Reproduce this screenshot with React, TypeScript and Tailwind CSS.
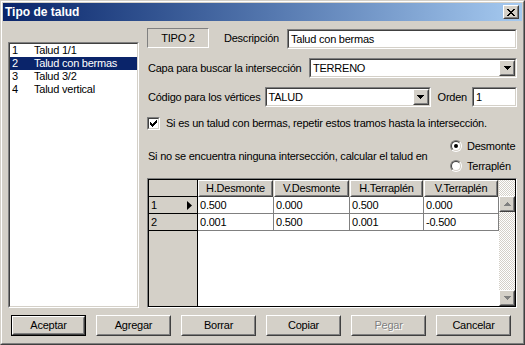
import React from "react";

type P = { className?: string; innerClassName?: string; children?: React.ReactNode };

function Sunken({ className = "", innerClassName = "", children }: P) {
  return (
    <div className={`border border-t-[#808080] border-l-[#808080] border-b-white border-r-white ${className}`}>
      <div className={`w-full h-full border border-t-[#404040] border-l-[#404040] border-b-[#d4d0c8] border-r-[#d4d0c8] ${innerClassName}`}>
        {children}
      </div>
    </div>
  );
}

function Raised({ className = "", innerClassName = "", children }: P) {
  return (
    <div className={`border border-t-white border-l-white border-b-[#404040] border-r-[#404040] bg-[#d4d0c8] ${className}`}>
      <div className={`w-full h-full border border-t-[#d4d0c8] border-l-[#d4d0c8] border-b-[#808080] border-r-[#808080] flex items-center justify-center ${innerClassName}`}>
        {children}
      </div>
    </div>
  );
}

function DownArrow({ color = "#000" }: { color?: string }) {
  return (
    <svg width="7" height="4" viewBox="0 0 7 4" className="block">
      <path d="M0 0h7v1H0zM1 1h5v1H1zM2 2h3v1H2zM3 3h1v1H3z" fill={color} />
    </svg>
  );
}

function UpArrow({ color = "#000" }: { color?: string }) {
  return (
    <svg width="7" height="4" viewBox="0 0 7 4" className="block">
      <path d="M3 0h1v1H3zM2 1h3v1H2zM1 2h5v1H1zM0 3h7v1H0z" fill={color} />
    </svg>
  );
}

function Combo({ className, value }: { className: string; value: string }) {
  return (
    <Sunken className={className} innerClassName="bg-white flex items-center">
      <span className="flex-1 pl-[2px] leading-none">{value}</span>
      <Raised className="w-[16px] h-full flex-none">
        <DownArrow />
      </Raised>
    </Sunken>
  );
}

function Radio({ checked, label }: { checked?: boolean; label: string }) {
  return (
    <div className="flex items-center h-[16px] gap-[5px]">
      <div className="w-[12px] h-[12px] rounded-full border border-t-[#808080] border-l-[#808080] border-b-white border-r-white">
        <div className="w-full h-full rounded-full border border-t-[#404040] border-l-[#404040] border-b-[#d4d0c8] border-r-[#d4d0c8] bg-white flex items-center justify-center">
          {checked && <div className="w-[4px] h-[4px] rounded-full bg-black" />}
        </div>
      </div>
      <span className="leading-none">{label}</span>
    </div>
  );
}

function Btn({ label, isDefault, disabled }: { label: string; isDefault?: boolean; disabled?: boolean }) {
  const text = (
    <span className={disabled ? "text-[#808080] [text-shadow:1px_1px_0_#ffffff]" : ""}>{label}</span>
  );
  if (isDefault) {
    return (
      <div className="w-[75px] h-[21px] border border-black">
        <Raised className="w-full h-full">{text}</Raised>
      </div>
    );
  }
  return <Raised className="w-[75px] h-[21px]">{text}</Raised>;
}

const rows = [
  ["0.500", "0.000", "0.500", "0.000"],
  ["0.001", "0.500", "0.001", "-0.500"],
];
const headers = ["H.Desmonte", "V.Desmonte", "H.Terraplén", "V.Terraplén"];
const colW = ["w-[76px]", "w-[76px]", "w-[74px]", "w-[75px]"];
const hdrW = ["w-[75px]", "w-[75px]", "w-[73px]", "w-[74px]"];

export default function App() {
  return (
    <div className="w-[525px] h-[345px] bg-[#d4d0c8] font-['Liberation_Sans',Arial,sans-serif] text-[11px] tracking-[-0.23px] whitespace-nowrap text-black select-none">
      <div className="w-full h-full border border-t-[#d4d0c8] border-l-[#d4d0c8] border-b-[#404040] border-r-[#404040]">
        <div className="w-full h-full border border-t-white border-l-white border-b-[#808080] border-r-[#808080]">
          <div className="w-full h-full border border-[#d4d0c8] flex flex-col">
            {/* Title bar */}
            <div className="h-[18px] bg-linear-to-r from-[#0a246a] to-[#a6caf0] flex items-center justify-between pl-[2px] pr-[3px]">
              <span className="text-white font-bold text-[12px] leading-none tracking-normal">Tipo de talud</span>
              <Raised className="w-[16px] h-[14px]">
                <svg width="8" height="7" viewBox="0 0 8 7" className="block">
                  <path d="M0 0h2v1H0zM6 0h2v1H6zM1 1h2v1H1zM5 1h2v1H5zM2 2h4v1H2zM3 3h2v1H3zM2 4h4v1H2zM1 5h2v1H1zM5 5h2v1H5zM0 6h2v1H0zM6 6h2v1H6z" fill="#000" />
                </svg>
              </Raised>
            </div>

            {/* Body */}
            <div className="flex flex-col pl-[5px] pt-[7px]">
              <div className="flex">
                {/* List */}
                <Sunken className="w-[131px] h-[266px] mt-[14px] flex-none" innerClassName="bg-white">
                  {["Talud 1/1", "Talud con bermas", "Talud 3/2", "Talud vertical"].map((t, i) => (
                    <div
                      key={t}
                      className={`h-[13px] flex items-center leading-none ${i === 1 ? "bg-[#0a246a] text-white" : ""}`}
                    >
                      <span className="w-[24px] pl-[2px]">{i + 1}</span>
                      <span>{t}</span>
                    </div>
                  ))}
                </Sunken>

                {/* Right panel */}
                <div className="ml-[8px] w-[370px] flex flex-col">
                  {/* Row A */}
                  <div className="flex items-start h-[21px]">
                    <div className="w-[62px] h-[20px] border border-t-[#808080] border-l-[#808080] border-b-white border-r-white flex items-center justify-center leading-none">
                      TIPO 2
                    </div>
                    <span className="ml-[15px] mt-[5px] leading-none">Descripción</span>
                    <Sunken className="ml-auto mt-[1px] w-[230px] h-[20px]" innerClassName="bg-white flex items-center pl-[2px] leading-none">
                      Talud con bermas
                    </Sunken>
                  </div>

                  {/* Row B */}
                  <div className="flex items-center mt-[9px] h-[20px]">
                    <span className="pl-[1px] leading-none">Capa para buscar la intersección</span>
                    <Combo className="ml-auto w-[208px] h-[20px] flex-none" value="TERRENO" />
                  </div>

                  {/* Row C */}
                  <div className="flex items-center mt-[9px] h-[20px]">
                    <span className="pl-[1px] leading-none flex-none">Código para los vértices</span>
                    <Combo className="ml-auto w-[166px] h-[20px] flex-none" value="TALUD" />
                    <span className="ml-[7px] leading-none flex-none">Orden</span>
                    <Sunken className="ml-[5px] w-[45px] h-[20px] flex-none" innerClassName="bg-white flex items-center pl-[2px] leading-none">
                      1
                    </Sunken>
                  </div>

                  {/* Row D */}
                  <div className="flex items-center mt-[10px] h-[13px]">
                    <Sunken className="w-[13px] h-[13px] flex-none" innerClassName="bg-white flex items-center justify-center">
                      <svg width="7" height="7" viewBox="0 0 7 7" className="block">
                        <path d="M0 2h1v1h1v1h1V3h1V2h1V1h1V0h1v3H6v1H5v1H4v1H3v1H2V6H1V5H0z" fill="#000" />
                      </svg>
                    </Sunken>
                    <span className="ml-[6px] leading-none">
                      Si es un talud con bermas, repetir estos tramos hasta la intersección.
                    </span>
                  </div>

                  {/* Row E */}
                  <div className="flex items-center mt-[8px]">
                    <span className="flex-1 pl-[1px] leading-none">
                      Si no se encuentra ninguna intersección, calcular el talud en
                    </span>
                    <div className="w-[67px] flex flex-col gap-[4px] flex-none">
                      <Radio checked label="Desmonte" />
                      <Radio label="Terraplén" />
                    </div>
                  </div>

                  {/* Grid */}
                  <div className="mt-[4px] w-[370px] h-[130px] border border-t-[#808080] border-l-[#808080] border-b-white border-r-white">
                    <div className="w-full h-full border border-black flex">
                      <div className="w-[350px] h-full flex flex-col">
                        {/* Header */}
                        <div className="flex h-[17px]">
                          <div className="w-[49px] h-full bg-[#d4d0c8] border-r border-b border-black" />
                          {headers.map((h, i) => (
                            <div key={h} className={`${colW[i]} h-full bg-[#d4d0c8]`}>
                              <Raised className={`${hdrW[i]} h-full`} innerClassName="leading-none">
                                {h}
                              </Raised>
                            </div>
                          ))}
                        </div>
                        {rows.map((r, ri) => (
                          <div key={ri} className="flex h-[17px]">
                            <div className="w-[49px] h-full bg-[#d4d0c8] border-r border-b border-black flex items-center justify-between pl-[2px] pr-[5px] leading-none">
                              <span>{ri + 1}</span>
                              {ri === 0 && (
                                <svg width="5" height="9" viewBox="0 0 5 9" className="block">
                                  <path d="M0 0l5 4.5L0 9z" fill="#000" />
                                </svg>
                              )}
                            </div>
                            {r.map((v, ci) => (
                              <div
                                key={ci}
                                className={`${colW[ci]} h-full bg-white border-r border-b border-[#808080] flex items-center pl-[2px] leading-none`}
                              >
                                {v}
                              </div>
                            ))}
                          </div>
                        ))}
                        <div className="flex flex-1">
                          <div className="w-[49px] h-full bg-[#d4d0c8] border-r border-black" />
                          <div className="flex-1 h-full bg-white" />
                        </div>
                      </div>
                      {/* Scrollbar */}
                      <div className="w-[16px] h-full flex flex-col bg-[repeating-conic-gradient(#d4d0c8_0%_25%,#ffffff_0%_50%)] bg-[length:2px_2px]">
                        <div className="h-[16px]" />
                        <Raised className="w-[16px] h-[16px]">
                          <UpArrow color="#808080" />
                        </Raised>
                        <div className="flex-1" />
                        <Raised className="w-[16px] h-[16px]">
                          <DownArrow color="#808080" />
                        </Raised>
                      </div>
                    </div>
                  </div>
                </div>
              </div>

              {/* Buttons */}
              <div className="flex gap-[10px] mt-[7px] ml-[3px]">
                <Btn label="Aceptar" isDefault />
                <Btn label="Agregar" />
                <Btn label="Borrar" />
                <Btn label="Copiar" />
                <Btn label="Pegar" disabled />
                <Btn label="Cancelar" />
              </div>
            </div>
          </div>
        </div>
      </div>
    </div>
  );
}
